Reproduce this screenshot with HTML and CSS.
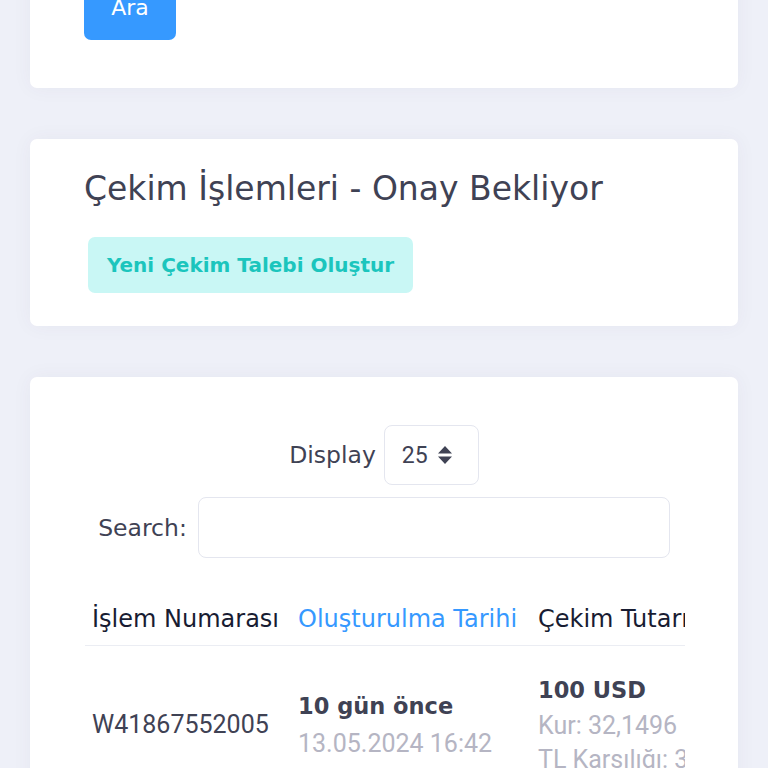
FILE: index.html
```html
<!DOCTYPE html>
<html lang="tr">
<head>
<meta charset="utf-8">
<link rel="stylesheet" href="styles.css">
</head>
<body>
<div class="page">
  <section class="card card-search">
    <button class="btn-primary">Ara</button>
  </section>

  <section class="card card-head">
    <h1 class="title">Çekim İşlemleri - Onay Bekliyor</h1>
    <button class="btn-light-success">Yeni Çekim Talebi Oluştur</button>
  </section>

  <section class="card card-table">
    <div class="dt-length">
      <label class="dt-label">Display</label>
      <div class="select">
        <span>25</span>
        <svg class="sort-icon" width="16" height="22" viewBox="0 0 16 22"><path d="M8 2 L15 9.5 L1 9.5 Z M1 12.5 L15 12.5 L8 20 Z" fill="#3f4254"/></svg>
      </div>
    </div>
    <div class="dt-search">
      <label class="dt-label">Search:</label>
      <div class="input"></div>
    </div>
    <div class="table-wrap">
      <table class="table">
        <thead>
          <tr>
            <th class="col1">İşlem Numarası</th>
            <th class="col2 sorted">Oluşturulma Tarihi</th>
            <th class="col3">Çekim Tutarı</th>
          </tr>
        </thead>
        <tbody>
          <tr>
            <td class="col1 plain">W41867552005</td>
            <td class="col2">
              <div class="strong">10 gün önce</div>
              <div class="muted">13.05.2024 16:42</div>
            </td>
            <td class="col3">
              <div class="strong">100 USD</div>
              <div class="muted">Kur: 32,1496</div>
              <div class="muted">TL Karşılığı: 3.214,96</div>
            </td>
          </tr>
        </tbody>
      </table>
    </div>
  </section>
</div>
</body>
</html>
```

FILE: styles.css
```css
html, body {
  margin: 0;
  padding: 0;
  background: #eef0f8;
  font-family: "DejaVu Sans", "Open Sans", sans-serif;
  color: #3f4254;
  overflow: hidden;
}
.page {
  padding: 0 30px;
  margin-top: -60px;
  display: flex;
  flex-direction: column;
  gap: 51px;
}
.card {
  background: #fff;
  border-radius: 7px;
  box-shadow: 0 0 20px rgba(82, 63, 105, 0.05);
  padding: 0 54px;
}
.card-search {
  padding-top: 34px;
  padding-bottom: 48px;
}
.btn-primary {
  display: block;
  width: 92px;
  height: 66px;
  border: 0;
  border-radius: 7px;
  background: #3699ff;
  color: #fff;
  font-family: inherit;
  font-size: 22px;
  padding: 0;
}
.card-head {
  padding-top: 30px;
  padding-bottom: 33px;
}
.title {
  margin: 0;
  font-weight: normal;
  font-size: 33px;
  line-height: 40px;
  color: #3f4254;
}
.btn-light-success {
  display: block;
  margin: 28px 0 0 4px;
  height: 56px;
  width: 325px;
  border: 0;
  border-radius: 7px;
  background: #c9f7f5;
  color: #1bc5bd;
  font-family: inherit;
  font-weight: bold;
  font-size: 20px;
  padding: 0;
}
.card-table {
  padding-top: 48px;
  padding-bottom: 40px;
}
.dt-length, .dt-search {
  display: flex;
  align-items: center;
  justify-content: center;
  gap: 8px;
}
.dt-label {
  font-size: 23.5px;
  color: #3f4254;
}
.select {
  box-sizing: border-box;
  width: 95px;
  height: 60px;
  border: 1px solid #e4e6ef;
  border-radius: 8px;
  display: flex;
  align-items: center;
  padding-left: 17px;
  gap: 9px;
  font-family: "Roboto", sans-serif;
  font-size: 23px;
  color: #3f4254;
}
.dt-search {
  margin-top: 12px;
  gap: 11px;
}
.input {
  box-sizing: border-box;
  width: 472px;
  height: 61px;
  border: 1px solid #e4e6ef;
  border-radius: 8px;
}
.table-wrap {
  margin-top: 46px;
  width: 600px;
  margin-left: 1px;
  overflow: hidden;
}
.table {
  border-collapse: collapse;
  white-space: nowrap;
  table-layout: fixed;
  width: 700px;
}
.table .col1 { width: 206px; }
.table .col2 { width: 240px; }
.table th {
  box-sizing: border-box;
  text-align: left;
  font-weight: normal;
  font-size: 24px;
  color: #181c32;
  padding: 0 7px 11px 7px;
  border-bottom: 1px solid #ebedf3;
  line-height: 30px;
}
.table th.sorted {
  color: #3699ff;
}
.table td {
  box-sizing: border-box;
  padding: 25px 7px 10px;
  vertical-align: middle;
  font-family: "Roboto", sans-serif;
}
.plain {
  font-size: 25px;
  color: #3f4254;
}
.strong {
  font-family: "DejaVu Sans", sans-serif;
  font-weight: bold;
  font-size: 22.5px;
  color: #3f4254;
  line-height: 38px;
}
.col2 .muted {
  margin-top: 2px;
}
.muted {
  font-size: 25px;
  color: #b5b5c3;
  line-height: 34px;
}
```
